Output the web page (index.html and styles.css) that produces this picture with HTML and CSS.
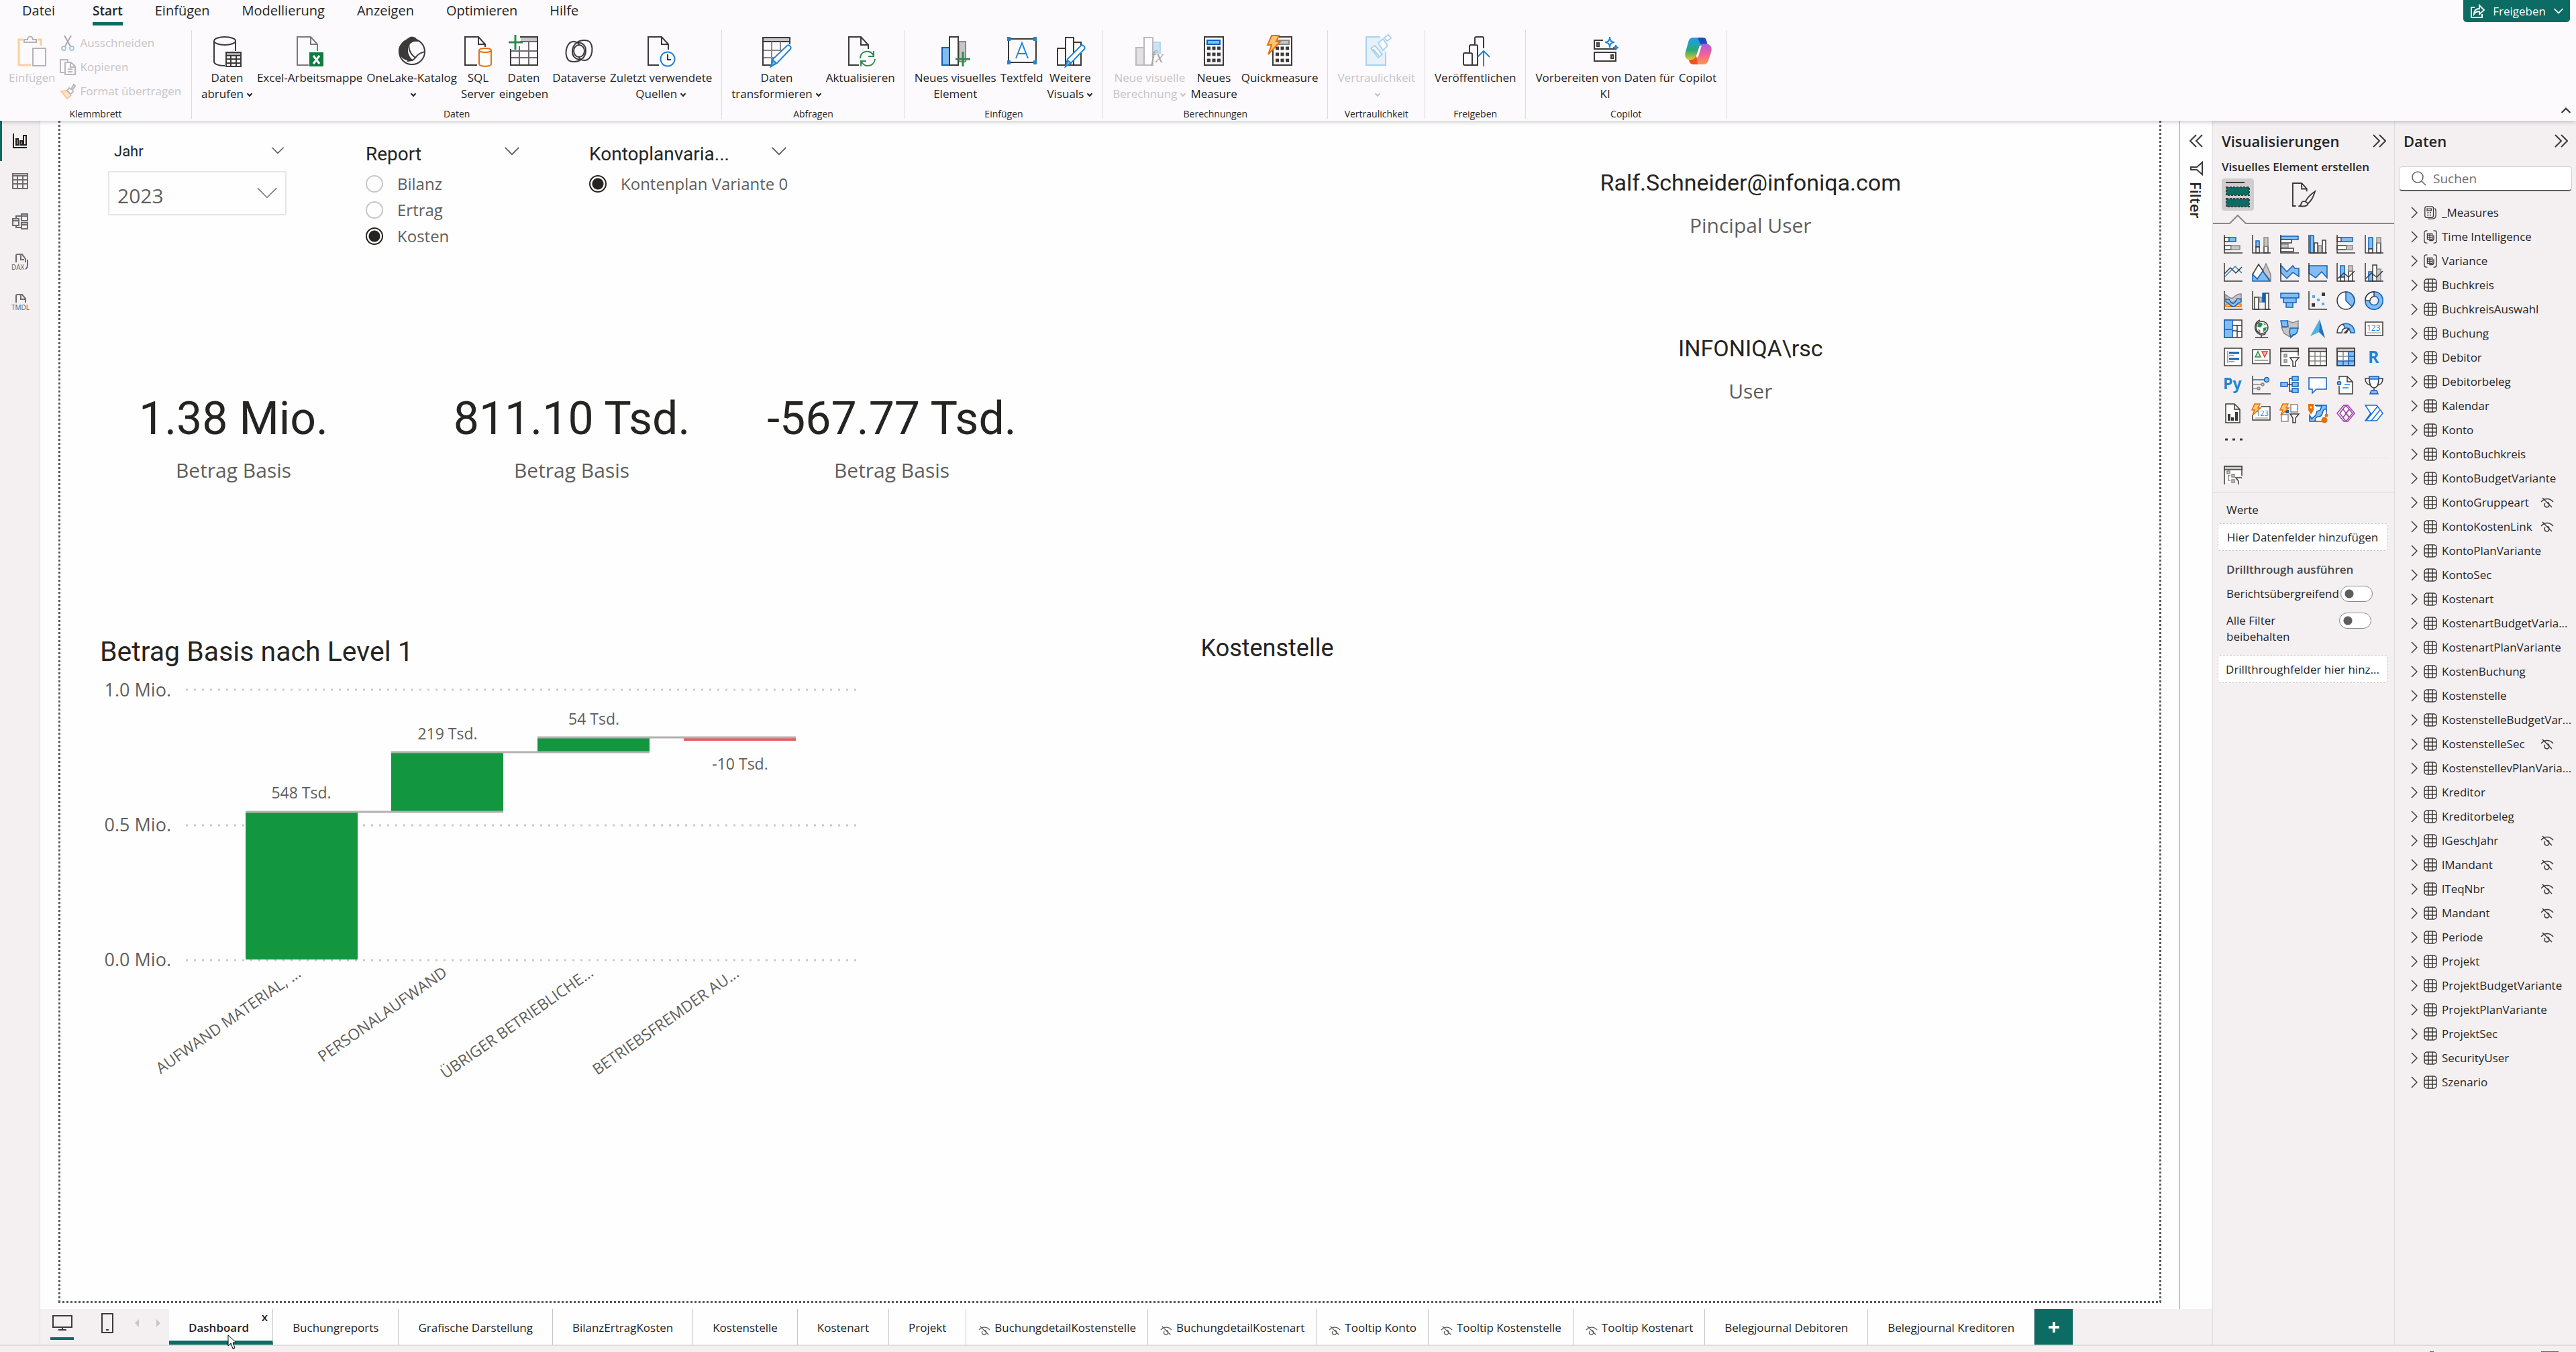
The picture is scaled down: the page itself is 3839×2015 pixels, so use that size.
FILE: index.html
```html
<!DOCTYPE html>
<html lang="de">
<head>
    <meta charset="UTF-8">
    <meta name="viewport" content="width=device-width, initial-scale=1.0">
    <title>Dashboard</title>
    <link rel="stylesheet" href="styles.css">
</head>
<body>
    <!-- shared icons -->
    <svg class="sprite" aria-hidden="true">
        <symbol id="chev-down" viewBox="0 0 24 14"><path d="M1 1l11 11L23 1"/></symbol>
        <symbol id="chev-right" viewBox="0 0 10 18"><path d="M1 1l8 8-8 8"/></symbol>
        <symbol id="dbl-right" viewBox="0 0 20 20"><path d="M1 1l9 9-9 9M10 1l9 9-9 9"/></symbol>
        <symbol id="dbl-left" viewBox="0 0 20 20"><path d="M19 1l-9 9 9 9M10 1l-9 9 9 9"/></symbol>
        <symbol id="eye-off" viewBox="0 0 20 16"><path d="M1 7c5-6 13-6 18 0M3 1l14 14M7 9a3.500 3.500 0 1 0 6 2M9 7.500a3.500 3.500 0 0 1 4 3"/></symbol>
        <symbol id="t-table" viewBox="0 0 20 20"><rect x="1" y="1" width="18" height="18" rx="4"/><path d="M7 1v18M13 1v18M1 7h18M1 13h18"/></symbol>
        <symbol id="t-measure" viewBox="0 0 20 22"><rect x="1" y="1" width="14" height="18" rx="3"/><path d="M4.500 4.500h7v3h-7zM17 4c2 1 2 3 2 5v6c0 4-2 6-6 6H6"/><path d="M5 11h2M9 11h2M5 15h2M9 15h2" stroke-width="2"/></symbol>
        <symbol id="t-calc" viewBox="0 0 22 22"><path d="M6 1H4a3 3 0 0 0-3 3v14a3 3 0 0 0 3 3h2M16 1h2a3 3 0 0 1 3 3v14a3 3 0 0 1-3 3h-2M6 6h8v9H6zM6 9h8M6 12h8M10 6v9M16.500 8v6c0 2-1 3-3 3H9"/></symbol>
    </svg>

    <header class="ribbon">
        <nav class="menu">
            <a href="#" class="file">Datei</a>
            <a href="#" class="active">Start</a>
            <a href="#">Einfügen</a>
            <a href="#">Modellierung</a>
            <a href="#">Anzeigen</a>
            <a href="#">Optimieren</a>
            <a href="#">Hilfe</a>
            <button class="share">
                <svg width="22" height="22" viewBox="0 0 22 22"><path d="M7 5H2v15h16v-5M6 15c0-6 3-8 8-8V2l7 7-7 6v-4c-4 0-6 1-8 4z"/></svg>
                Freigeben
                <svg width="14" height="9" viewBox="0 0 24 14"><path d="M1 1l11 11L23 1" stroke-width="3"/></svg>
            </button>
        </nav>
        <div class="groups">
            <section class="group clipboard">
                <div class="tools">
                    <button class="tool off">
                        <svg viewBox="0 0 44 48"><path d="M8 7H2v38h18M30 7h5v9" stroke="#fbcf9c" stroke-width="3"/><path d="M10 11V7h5c0-6 8-6 8 0h5v4zM23 20h19v26H23z" stroke="#b5b3b5" fill="#fcfafd"/></svg>
                        <span>Einfügen</span>
                    </button>
                    <div class="small-tools">
                        <button><svg viewBox="0 0 24 24"><path d="M7 1l9 16M17 1L8 17" stroke="#a9a7a9"/><circle cx="6" cy="20" r="3" stroke="#9cc8ea"/><circle cx="18" cy="20" r="3" stroke="#9cc8ea"/></svg>Ausschneiden</button>
                        <button><svg viewBox="0 0 24 24"><path d="M8 20H1V1h11v4M8 5h9l6 6v12H8zM16 5v7h7M12 15h7M12 19h7"/></svg>Kopieren</button>
                        <button><svg viewBox="0 0 24 24"><path d="M2 12l9-1 6 7-6 5z" fill="#fde3c6" stroke="#f9c999"/><path d="M11 11l3-4 3 2 4-7 2 2-4 6 1 3-4 3z"/></svg>Format übertragen</button>
                    </div>
                </div>
                <h2>Klemmbrett</h2>
            </section>
            <section class="group">
                <div class="tools">
                    <button class="tool">
                        <svg viewBox="0 0 44 48"><path d="M3 9v31c0 3 5 6 16 6M35 9v15"/><ellipse cx="19" cy="9" rx="16" ry="6"/><path d="M21 26h22v21H21z" fill="#fff"/><path d="M21 26h22v5H21z" fill="#a8a6a8"/><path d="M28 31v16M36 31v16M21 36h22M21 42h22"/></svg>
                        <span>Daten<br>abrufen<i class="caret"></i></span>
                    </button>
                    <button class="tool">
                        <svg viewBox="0 0 44 48"><path d="M20 45H3V3h20l10 11v10M23 3v11h10" stroke="#7b797b"/><path d="M21 26h21v21H21z" fill="#107c41" stroke="none"/><path d="M27 31l9 12M36 31l-9 12" stroke="#fff" stroke-width="3"/></svg>
                        <span>Excel-Arbeitsmappe</span>
                    </button>
                    <button class="tool">
                        <svg viewBox="0 0 44 48"><circle cx="22" cy="25" r="19"/><path d="M14 8C20 2 26 2 30 9c-8-1-14 4-15 11-1 8 2 13 7 18C8 38 0 28 4 18c2-4 6-6 10-10z" fill="#3b3a39"/><path d="M18 11c-2 9 1 17 9 23 4-6 8-7 14-9M27 34c-3 4-7 5-12 5"/></svg>
                        <span>OneLake-Katalog<br><i class="caret"></i></span>
                    </button>
                    <button class="tool">
                        <svg viewBox="0 0 44 48"><path d="M21 45H3V3h20l10 11v4M23 3v11h10"/><path d="M24 23v20c0 5 18 5 18 0V23" stroke="#e3700f" fill="#fff"/><ellipse cx="33" cy="23" rx="9" ry="3" stroke="#e3700f" fill="#fff"/></svg>
                        <span>SQL<br>Server</span>
                    </button>
                    <button class="tool">
                        <svg viewBox="0 0 44 48"><path d="M18 4h25v6H18z" fill="#c8c6c8" stroke="none"/><path d="M17 3h26v42H3V21M17 10h26M3 24h40M3 34h40M16 17v28M30 10v35" stroke="#6d6b6d"/><path d="M17 3h26v42H3V21"/><path d="M10 0v22M0 11h21" stroke="#2e8b4c" stroke-width="3"/></svg>
                        <span>Daten<br>eingeben</span>
                    </button>
                    <button class="tool">
                        <svg viewBox="0 0 44 48"><ellipse cx="22" cy="24" rx="8" ry="9"/><path d="M36 9c-13-4-24 4-24 16 0 9 9 15 17 9M8 39c13 4 24-4 24-16 0-9-9-15-17-9M36 9c9 5 7 29-6 29-5 0-8-3-8-5M8 39C-1 34 1 10 14 10c5 0 8 3 8 5"/></svg>
                        <span>Dataverse</span>
                    </button>
                    <button class="tool">
                        <svg viewBox="0 0 44 48"><path d="M19 45H3V3h20l10 11v8M23 3v11h10"/><circle cx="32" cy="36" r="10.500" stroke="#2284d1" fill="#fff"/><path d="M32 29v8h5"/></svg>
                        <span>Zuletzt verwendete<br>Quellen<i class="caret"></i></span>
                    </button>
                </div>
                <h2>Daten</h2>
            </section>
            <section class="group">
                <div class="tools">
                    <button class="tool">
                        <svg viewBox="0 0 44 48"><path d="M2 4h40v6H2z" fill="#c8c6c8"/><path d="M2 23h32M2 34h22M15 10v35M28 10v21" stroke="#8a8886"/><path d="M15 45H2V4h40v10"/><path d="M14 47l3-11 21-20c3-2 7 2 5 5L23 42z" fill="#fff" stroke="#2284d1"/><path d="M14 47l3-9 5 4z" fill="#83bdf0" stroke="#2284d1"/></svg>
                        <span>Daten<br>transformieren<i class="caret"></i></span>
                    </button>
                    <button class="tool">
                        <svg viewBox="0 0 44 48"><path d="M20 45H5V3h18l11 12v6M23 3v12h11"/><path d="M22 35c0-13 17-13 20-4M42 24v8h-8M44 36c-1 12-17 13-20 4M23 47v-8h8" stroke="#2e8b4c"/></svg>
                        <span>Aktualisieren</span>
                    </button>
                </div>
                <h2>Abfragen</h2>
            </section>
            <section class="group">
                <div class="tools">
                    <button class="tool">
                        <svg viewBox="0 0 44 48"><path d="M2 19h11v26H2z" fill="#83bdf0" stroke="#1060b8"/><path d="M27 10h10v30H27z" fill="#c8c6c4" stroke="#8a8886"/><path d="M13 3h13v42H13z" fill="#fff"/><path d="M33 25v22M22 36h22" stroke="#2e8b4c" stroke-width="3"/></svg>
                        <span>Neues visuelles<br>Element</span>
                    </button>
                    <button class="tool">
                        <svg viewBox="0 0 44 48"><path d="M2 6h41v35H2z"/><path d="M0 3h5v6H0zM39 3h5v6h-5zM0 38h5v6H0zM39 38h5v6h-5z" fill="#2284d1" stroke="none"/><path d="M13 35l9-23 9 23M16 28h12" stroke="#2284d1"/></svg>
                        <span>Textfeld</span>
                    </button>
                    <button class="tool">
                        <svg viewBox="0 0 44 48"><path d="M3 20h12v25H3zM27 11h11v34H27z"/><path d="M15 4h12v41H15z" fill="#fff"/><path d="M15 47l3-11 20-20c3-2 7 2 5 5L23 42z" fill="#fff" stroke="#2284d1"/><path d="M15 47l3-9 5 4z" fill="#83bdf0" stroke="#2284d1"/></svg>
                        <span>Weitere<br>Visuals<i class="caret"></i></span>
                    </button>
                </div>
                <h2>Einfügen</h2>
            </section>
            <section class="group">
                <div class="tools">
                    <button class="tool off">
                        <svg viewBox="0 0 44 48"><path d="M2 19h12v26H2z" fill="#e3e1e3" stroke="#bbb"/><path d="M27 11h11v16H27z" fill="#cce3f6" stroke="#b3d3ee"/><path d="M14 4h13v41H14z" fill="#fff" stroke="#bbb"/><text x="24" y="41" font-size="26" font-style="italic" font-family="Liberation Serif, serif" fill="#a9a7a9">fx</text></svg>
                        <span>Neue visuelle<br>Berechnung<i class="caret"></i></span>
                    </button>
                    <button class="tool">
                        <svg viewBox="0 0 44 48"><path d="M8 3h28v42H8z"/><path d="M12 8h19v6H12z" fill="#83bdf0" stroke="#1060b8"/><path d="M12 20h20M12 29h20M12 38h20" stroke-width="5" stroke-dasharray="5 2.500"/></svg>
                        <span>Neues<br>Measure</span>
                    </button>
                    <button class="tool">
                        <svg viewBox="0 0 44 48"><path d="M12 3h28v42H12z" fill="#fff"/><path d="M20 8h16v6H20z" fill="#c8c6c4" stroke="#8a8886"/><path d="M16 20h20M16 29h20M16 38h20" stroke-width="5" stroke-dasharray="5 2.500"/><path d="M10 1h11l-4 9h6L5 29l5-14H4z" fill="#ffc66e" stroke="#e3700f"/></svg>
                        <span>Quickmeasure</span>
                    </button>
                </div>
                <h2>Berechnungen</h2>
            </section>
            <section class="group">
                <div class="tools">
                    <button class="tool off">
                        <svg class="label-icon" viewBox="0 0 44 48"><path d="M36 26v19H7V3h21" fill="#e6f1fa"/><path d="M14 20l6-4 11 13-6 5zM17 21l9 10M25 12l7-6 7 10-7 7zM34 4l6-4 4 5-6 4z" fill="#fff"/></svg>
                        <span>Vertraulichkeit<br><i class="caret"></i></span>
                    </button>
                </div>
                <h2>Vertraulichkeit</h2>
            </section>
            <section class="group">
                <div class="tools">
                    <button class="tool">
                        <svg viewBox="0 0 44 48"><path d="M26 45H6c-2 0-2-1-2-2V29c0-2 1-2 2-2h7V17c0-2 1-2 2-2h6V5c0-2 1-2 2-2h9c2 0 2 1 2 2v15M13 27c3 0 4 0 4 2v16M21 15c3 0 4 0 4 2v28"/><path d="M34 47V24M25 33l9-9 9 9" stroke="#2284d1"/></svg>
                        <span>Veröffentlichen</span>
                    </button>
                </div>
                <h2>Freigeben</h2>
            </section>
            <section class="group">
                <div class="tools">
                    <button class="tool">
                        <svg viewBox="0 0 44 48"><path d="M19 8H6v13h32M6 26h32v13H6zM10 12h3v5h-3zM31 30h3v5h-3z"/><path d="M29 3c0 5 2 8 7 8-5 0-7 3-7 8 0-5-2-8-7-8 5 0 7-3 7-8zM38 15c0 3 1 4 4 4-3 0-4 1-4 4 0-3-1-4-4-4 3 0 4-1 4-4z" stroke="#2284d1" fill="#fff"/></svg>
                        <span>Vorbereiten von Daten für<br>KI</span>
                    </button>
                    <button class="tool">
                        <svg class="copilot" viewBox="0 0 44 48">
                            <defs>
                                <linearGradient id="cp-a" x1="0" y1="0" x2="0" y2="1"><stop offset="0" stop-color="#1e9bf0"/><stop offset=".55" stop-color="#2aa876"/><stop offset="1" stop-color="#f7c81e"/></linearGradient>
                                <linearGradient id="cp-b" x1="0" y1="0" x2="0" y2="1"><stop offset="0" stop-color="#b05ae0"/><stop offset=".5" stop-color="#f0609a"/><stop offset="1" stop-color="#ff9a4c"/></linearGradient>
                            </defs>
                            <path d="M15 4h14c5 0 6 3 7 8l1 3c-6-1-9 1-11 6l-4 12c-2 5-5 6-9 5-9-1-11-5-9-13l4-14c1-4 3-7 7-7z" fill="url(#cp-a)"/>
                            <path d="M22 4h7c5 0 6 3 7 10h-8c-3-1-4-5-6-10z" fill="#1b49c4"/>
                            <path d="M30 44H17c-5 0-7-2-8-7 6 1 9-1 11-6l4-11c2-5 4-7 8-7 10 0 12 6 10 13l-4 12c-1 4-4 6-8 6z" fill="url(#cp-b)"/>
                            <path d="M26 16h2l-5 16c-1 2-2 2-4 2l5-15c0-2 1-3 2-3z" fill="#fff"/>
                            <path d="M9 37c6 1 9-1 11-6l2 13h-5c-5 0-7-2-8-7z" fill="#f4511e"/>
                        </svg>
                        <span>Copilot</span>
                    </button>
                </div>
                <h2>Copilot</h2>
            </section>
            <button class="collapse" aria-label="Menüband reduzieren"><svg width="14" height="9" viewBox="0 0 24 14"><path d="M1 13L12 2l11 11" stroke-width="4"/></svg></button>
        </div>
    </header>

    <div class="workspace">
        <nav class="rail">
            <button class="active" aria-label="Berichtsansicht"><svg viewBox="0 0 24 24"><path d="M2 1v21h20M6 9h3v9H6zM12 12h3v6h-3zM17 4h4v14h-4z"/></svg></button>
            <button aria-label="Tabellenansicht"><svg viewBox="0 0 24 24"><path d="M1 1h22v22H1zM1 4h22M1 10h22M1 16h22M8 4v19M16 4v19"/></svg></button>
            <button aria-label="Modellansicht"><svg viewBox="0 0 24 24"><path d="M1 8h9v10H1zM14 1h9v10h-9zM14 14h9v9h-9zM1 11h9M14 4h9M14 17h9M6 8V4h8M6 18v3h8"/></svg></button>
            <button aria-label="DAX-Abfrageansicht"><svg viewBox="0 0 24 24"><path d="M6 13V3c0-1 1-2 2-2h7l5 7v5M13 1v8h5M23 9v8c0 3-1 5-3 6"/><text x="-1" y="24" font-size="10">DAX</text></svg></button>
            <button aria-label="TMDL-Ansicht"><svg viewBox="0 0 24 24"><path d="M6 13V3c0-1 1-2 2-2h7l5 6v6M13 1v7h7"/><text x="-1" y="24" font-size="10">TMDL</text></svg></button>
        </nav>

        <div class="center">
            <div class="stage">
                <main class="page">
                    <div class="col">
                        <div class="slicers">
                            <section class="slicer year">
                                <header><label for="year">Jahr</label><svg width="20" height="11"><use href="#chev-down"/></svg></header>
                                <div class="dropdown">
                                    <select id="year"><option>2023</option></select>
                                    <svg width="32" height="18"><use href="#chev-down"/></svg>
                                </div>
                            </section>
                            <section class="slicer report">
                                <header><h3>Report</h3><svg width="24" height="13"><use href="#chev-down"/></svg></header>
                                <label><input type="radio" name="report">Bilanz</label>
                                <label><input type="radio" name="report">Ertrag</label>
                                <label><input type="radio" name="report" checked>Kosten</label>
                            </section>
                            <section class="slicer plan">
                                <header><h3>Kontoplanvaria...</h3><svg width="24" height="13"><use href="#chev-down"/></svg></header>
                                <label><input type="radio" name="plan" checked>Kontenplan Variante 0</label>
                            </section>
                        </div>
                        <div class="kpis">
                            <div class="kpi"><strong>1.38 Mio.</strong><span>Betrag Basis</span></div>
                            <div class="kpi"><strong>811.10 Tsd.</strong><span>Betrag Basis</span></div>
                            <div class="kpi"><strong>-567.77 Tsd.</strong><span>Betrag Basis</span></div>
                        </div>
                        <section class="chart">
                            <h3>Betrag Basis nach Level 1</h3>
                            <svg width="1130" height="620" viewBox="0 0 1130 620">
                                <g class="grid"><path d="M128 28H1128M128 230H1128M128 431H1128"/></g>
                                <g class="axis">
                                    <text x="106" y="38">1.0 Mio.</text>
                                    <text x="106" y="239">0.5 Mio.</text>
                                    <text x="106" y="440">0.0 Mio.</text>
                                </g>
                                <g class="up">
                                    <rect x="217" y="210" width="167" height="220"/>
                                    <rect x="434" y="121" width="167" height="89"/>
                                    <rect x="652" y="99" width="167" height="23"/>
                                </g>
                                <rect class="down" x="870" y="100" width="167" height="4"/>
                                <path class="connector" d="M217 210H601M434 121H819M652 99H1037"/>
                                <g class="values">
                                    <text x="300" y="190">548 Tsd.</text>
                                    <text x="518" y="102">219 Tsd.</text>
                                    <text x="736" y="80">54 Tsd.</text>
                                    <text x="954" y="147">-10 Tsd.</text>
                                </g>
                                <g class="cats">
                                    <text transform="translate(301 454) rotate(-35)">AUFWAND MATERIAL, ...</text>
                                    <text transform="translate(519 453) rotate(-35)">PERSONALAUFWAND</text>
                                    <text transform="translate(737 453) rotate(-35)">ÜBRIGER BETRIEBLICHE...</text>
                                    <text transform="translate(954 454) rotate(-35)">BETRIEBSFREMDER AU...</text>
                                </g>
                            </svg>
                        </section>
                    </div>
                    <div class="col">
                        <div class="users">
                            <div class="user"><strong>Ralf.Schneider@infoniqa.com</strong><span>Pincipal User</span></div>
                            <div class="user"><strong>INFONIQA\rsc</strong><span>User</span></div>
                        </div>
                        <h3 class="cost-title">Kostenstelle</h3>
                    </div>
                </main>
                <aside class="filter-pane">
                    <button aria-label="Filterbereich erweitern"><svg width="20" height="20"><use href="#dbl-left"/></svg></button>
                    <svg width="20" height="20" viewBox="0 0 20 20"><path d="M19 1v18l-8-7H2V8h9z"/></svg>
                    <h2>Filter</h2>
                </aside>
            </div>

            <footer class="tabs">
                <div class="views">
                    <button class="active" aria-label="Desktoplayout"><svg width="30" height="24" viewBox="0 0 30 24"><path d="M1 1h28v17H1zM15 18v4M9 22h12"/></svg></button>
                    <button class="phone" aria-label="Mobiles Layout"><svg width="20" height="30" viewBox="0 0 20 30"><path d="M2 1h16v28H2zM8 25h4"/></svg></button>
                    <button class="step" aria-label="Zurück"><svg width="6" height="12" viewBox="0 0 6 12"><path d="M6 0v12L0 6z"/></svg></button>
                    <button class="step" aria-label="Weiter"><svg width="6" height="12" viewBox="0 0 6 12"><path d="M0 0v12l6-6z"/></svg></button>
                </div>
                <a href="#" class="tab active">Dashboard<span class="close">x</span>
                    <svg class="pointer" width="14" height="22" viewBox="0 0 14 22"><path d="M1 1v16l4-4 3 8 3-1-3-8h5z"/></svg>
                </a>
                <a href="#" class="tab">Buchungreports</a>
                <a href="#" class="tab">Grafische Darstellung</a>
                <a href="#" class="tab">BilanzErtragKosten</a>
                <a href="#" class="tab">Kostenstelle</a>
                <a href="#" class="tab">Kostenart</a>
                <a href="#" class="tab">Projekt</a>
                <a href="#" class="tab hid"><svg><use href="#eye-off"/></svg>BuchungdetailKostenstelle</a>
                <a href="#" class="tab hid"><svg><use href="#eye-off"/></svg>BuchungdetailKostenart</a>
                <a href="#" class="tab hid"><svg><use href="#eye-off"/></svg>Tooltip Konto</a>
                <a href="#" class="tab hid"><svg><use href="#eye-off"/></svg>Tooltip Kostenstelle</a>
                <a href="#" class="tab hid"><svg><use href="#eye-off"/></svg>Tooltip Kostenart</a>
                <a href="#" class="tab">Belegjournal Debitoren</a>
                <a href="#" class="tab">Belegjournal Kreditoren</a>
                <button class="add" aria-label="Neue Seite"><svg width="16" height="16" viewBox="0 0 16 16"><path d="M8 0v16M0 8h16" stroke-width="4"/></svg></button>
            </footer>
        </div>

        <aside class="pane viz">
            <header><h2>Visualisierungen</h2><button aria-label="Reduzieren"><svg width="20" height="20"><use href="#dbl-right"/></svg></button></header>
            <h3>Visuelles Element erstellen</h3>
            <div class="modes">
                <button class="active" aria-label="Visual erstellen"><svg width="36" height="40" viewBox="0 0 36 40"><path d="M0 2h28"/><path d="M1 9h34v12H1zM1 26h34v12H1z" fill="#0c6b63" stroke-dasharray="3 2"/></svg></button>
                <button aria-label="Visual formatieren"><svg width="36" height="38" viewBox="0 0 38 38"><path d="M7 37H2V1h14l8 9v4M16 1v9h8M37 14c-7 5-13 11-15 16l4 3c5-4 9-12 11-19zM22 30c-4-1-6 0-7 4 0 2-2 3-4 3 7 1 14 1 15-4"/></svg></button>
            </div>
            <svg class="notch" viewBox="0 0 271 14"><path d="M0 13H25L37 1 49 13H271"/></svg>
            <div class="visuals">
                <svg viewBox="0 0 28 28"><path class="w" d="M1 4h7v6H1zM1 16h10v6H1z"/><path class="b" d="M8 4h10v6H8z"/><path class="g" d="M11 16h13v6H11z"/><path d="M1 0v27h27"/></svg>
                <svg viewBox="0 0 28 28"><path class="b" d="M6 9h5v9H6z"/><path class="w" d="M6 18h5v9H6zM18 17h6v10h-6z"/><path class="g" d="M18 4h6v13h-6z"/><path d="M1 0v27h27"/></svg>
                <svg viewBox="0 0 28 28"><path class="w" d="M1 7h16v5H1zM1 20h19v5H1z"/><path class="g" d="M1 14h11v5H1z"/><path class="b" d="M1 2h26v5H1z"/><path d="M1 0v27h27"/></svg>
                <svg viewBox="0 0 28 28"><path class="w" d="M9 12h5v15H9zM21 8h5v19h-5z"/><path class="g" d="M15 16h5v11h-5z"/><path class="b" d="M3 1h5v26H3z"/><path d="M1 0v27h27"/></svg>
                <svg viewBox="0 0 28 28"><path class="w" d="M1 4h6v6H1zM1 16h14v6H1z"/><path class="b" d="M7 4h17v6H7z"/><path class="g" d="M15 16h9v6h-9z"/><path d="M1 0v27h27"/></svg>
                <svg viewBox="0 0 28 28"><path class="b" d="M6 4h6v17H6z"/><path class="w" d="M6 21h6v6H6zM18 12h6v15h-6z"/><path class="g" d="M18 4h6v8h-6z"/><path d="M1 0v27h27"/></svg>

                <svg viewBox="0 0 28 28"><path d="M1 21L17 5l10 10" stroke="#2284d1"/><path d="M1 16l9-9 8 8 9-9M1 0v27h27"/></svg>
                <svg viewBox="0 0 28 28"><path class="g" d="M21 1l7 16v9L16 12z"/><path class="w" d="M1 17l9-15 7 10-9 12z"/><path class="b" d="M1 17l7 7 8-12 11 15H1z"/></svg>
                <svg viewBox="0 0 28 28"><path class="b" d="M1 3l9 10 9-9 3 4h6v12l-9-6-9 9-9-9z"/><path d="M1 0v27h27"/></svg>
                <svg viewBox="0 0 28 28"><path class="b" d="M1 4h27v18l-8-9-9 9-10-7z"/><path d="M1 0v27h27"/></svg>
                <svg viewBox="0 0 28 28"><path class="b" d="M6 4h6v17H6z"/><path class="w" d="M6 21h6v6H6zM18 12h6v15h-6z"/><path class="g" d="M18 4h6v8h-6z"/><path d="M1 24l10-9 7 6 9-9M1 0v27h27"/></svg>
                <svg viewBox="0 0 28 28"><path class="b" d="M6 13h6v14H6z"/><path class="w" d="M12 3h6v24h-6z"/><path class="g" d="M18 9h6v18h-6z"/><path d="M1 24l9-9 8 6 9-9M1 0v27h27"/></svg>

                <svg viewBox="0 0 28 28"><path d="M3 19h23v4H3z" fill="#ffc66e" stroke="#e3700f"/><path class="g" d="M3 5c6 5 9 7 12 4s6-5 11-5v7c-5 0-8 3-11 5S8 15 3 12z"/><path class="b" d="M3 12h5c4 9 8 8 12-1l6 1v4c-5 0-7 7-12 7S8 16 3 16z"/><path d="M1 0v27h27"/></svg>
                <svg viewBox="0 0 28 28"><path class="w" d="M4 9h6v18H4zM20 3h5v24h-5z"/><path class="g" d="M11 9h4v7h-4z"/><path d="M16 3h3v13h-3z" fill="#1060b8" stroke="#1060b8"/><path d="M1 0v27h27"/></svg>
                <svg viewBox="0 0 28 28"><path class="b" d="M1 3h27v7H1zM5 10h19v7H5zM9 17h10v7H9z"/></svg>
                <svg viewBox="0 0 28 28"><path d="M6 6h4v4H6zM13 11h4v4h-4zM20 17h4v4h-4z" fill="#5fa8e6" stroke="none"/><path d="M20 2h5v5h-5zM5 18h5v5H5z" fill="#3b3a39" stroke="none"/><path d="M1 0v27h27"/></svg>
                <svg viewBox="0 0 28 28"><circle class="w" cx="14" cy="14" r="13"/><path class="b" d="M14 14V1a13 13 0 0 1 9 22z"/></svg>
                <svg viewBox="0 0 28 28"><circle cx="14" cy="14" r="10" stroke="#1060b8" stroke-width="8"/><circle cx="14" cy="14" r="10" stroke="#83bdf0" stroke-width="5"/><path class="w" d="M1 14A13 13 0 0 1 14 1v7a6 6 0 0 0-6 6z"/></svg>

                <svg viewBox="0 0 28 28"><path class="w" d="M1 1h26v26H1zM13 9h14M20 9v18M13 17h7M20 18h7"/><path class="b" d="M1 1h12v26H1zM1 15h12"/></svg>
                <svg viewBox="0 0 28 28"><circle cx="15" cy="12" r="9" fill="#fff"/><path d="M10 5l5 0 1 3-3 4-5-1zM17 13l5-2-1 5-4 3zM9 14l4 3-2 2zM17 5l4 3-2 1z" fill="#2e8b4c" stroke="none"/><path d="M12 1C4 4 2 15 9 21c4 3 9 3 12 0M14 23v4M5 27h19"/></svg>
                <svg viewBox="0 0 28 28"><path class="g" d="M11 2l8 3 8-3v10l-4 10-6 4-4-1-7-4-4-9h7z"/><path class="b" d="M1 2h10l1 9H3zM15 13h12c-1 5-2 10-8 10l-3 4-2-8z"/></svg>
                <svg viewBox="0 0 28 28"><path d="M17 0L3 25l13-6z" fill="#52b0e0" stroke="none"/><path d="M17 0l8 28-9-9z" fill="#1f74c4" stroke="none"/></svg>
                <svg viewBox="0 0 28 28"><path class="w" d="M1 20C1 13 5 8 10 7l3 6c-3 1-5 3-5 7z"/><path class="b" d="M10 7c9-3 17 3 17 13h-6c0-4-3-8-8-7z"/><path d="M12 20l7-7-4 7z" fill="#3b3a39"/></svg>
                <svg viewBox="0 0 28 28"><path class="w" d="M1 4h26v20H1z"/><text x="3" y="17" font-size="12" class="num">123</text><path d="M4 20h20" stroke="#8a8886" stroke-width="1"/></svg>

                <svg viewBox="0 0 28 28"><path class="w" d="M1 1h26v26H1z"/><path d="M6 5v18" stroke="#8a8886"/><path d="M8 8h15M8 17h15" stroke="#1060b8" stroke-width="3"/><path d="M8 12h7M8 21h8" stroke="#8a8886"/></svg>
                <svg viewBox="0 0 28 28"><path class="w" d="M1 3h26v21H1z"/><path d="M9 6l4 8H5z" fill="#cfe8d6" stroke="#2e8b4c"/><path d="M19 14l4-8h-8z" fill="#f6b3a8" stroke="#e0402c"/><path d="M4 19h20" stroke="#8a8886"/></svg>
                <svg viewBox="0 0 28 28"><path class="w" d="M1 1h26v26H1z" stroke="none"/><path d="M1 1h26v5H1z" fill="#c8c6c4"/><path d="M27 12V1H1v26h14"/><path class="g" d="M6 10h4v4H6zM6 18h4v4H6z"/><path class="w" d="M15 15h13l-5 6v7h-4v-7z"/></svg>
                <svg viewBox="0 0 28 28"><path class="w" d="M1 1h26v26H1z"/><path d="M1 13h26M1 20h26M10 6v21M18 6v21" stroke="#8a8886"/><path d="M1 1v26h26V1"/><path d="M1 1h26v5H1z" fill="#c8c6c4"/></svg>
                <svg viewBox="0 0 28 28"><path class="w" d="M1 1h26v26H1z"/><path class="b" d="M18 6h9v21H1v-7h17zM1 20h26M10 20v7M18 20v7M18 13h9"/><path d="M1 13h17M10 6v14" stroke="#8a8886"/><path d="M1 1h26v26H1z"/><path d="M1 1h26v5H1z" fill="#c8c6c4"/></svg>
                <svg viewBox="0 0 28 28"><text x="5" y="23" font-size="25" class="lang">R</text></svg>

                <svg viewBox="0 0 28 28"><text x="-1" y="20" font-size="23" class="lang">Py</text></svg>
                <svg viewBox="0 0 28 28"><path d="M1 0v27h27"/><path d="M1 6h17" stroke="#1060b8"/><circle class="b" cx="22" cy="6" r="3.500"/><path d="M1 13h13M1 19h7" stroke="#8a8886"/><circle class="g" cx="16" cy="13" r="2"/><circle class="g" cx="10" cy="19" r="2"/></svg>
                <svg viewBox="0 0 28 28"><path d="M11 13h7M18 4h-4v19h4"/><path class="b" d="M1 10h10v6H1zM18 1h9v6h-9zM18 10h9v6h-9zM18 19h9v6h-9z"/></svg>
                <svg viewBox="0 0 28 28"><path d="M1 3h26v17H12l-6 6v-6H1z" fill="#fff" stroke="#1060b8"/></svg>
                <svg viewBox="0 0 28 28"><path class="w" d="M4 6V1h12l8 8v18H4V15M16 1v8h8"/><circle class="b" cx="4" cy="11" r="2.500"/><path d="M12 13h8M9 18h9" stroke="#2284d1"/></svg>
                <svg viewBox="0 0 28 28"><path d="M7 4H1c0 6 2 9 7 10M21 4h6c0 6-2 9-7 10M14 18v5"/><path class="w" d="M7 2h14c0 9-1 16-7 16S7 11 7 2z"/><path class="b" d="M7 1h14v4H7zM10 22h8l2 5H8z"/></svg>

                <svg viewBox="0 0 28 28"><path class="w" d="M3 0h13l8 8v20H3zM16 0v8h8"/><path d="M8 15v10M13 20v5M19 12v13" stroke-width="4"/></svg>
                <svg viewBox="0 0 28 28"><path class="w" d="M14 4h13v20H1V17"/><text x="6" y="18" font-size="11" class="num">123</text><path d="M5 21h19" stroke="#8a8886" stroke-width="1"/><path d="M4 0h8L9 6h4L1 17l3-8H0z" fill="#ffc66e" stroke="#e3700f"/></svg>
                <svg viewBox="0 0 28 28"><path d="M16 1h10v11H16zM2 16h10v10H2z" fill="#fff" stroke="#8a8886"/><path d="M8 9h5v5H8z" fill="#1060b8" stroke="none"/><path class="w" d="M15 15h13l-5 6v7h-4v-7z"/><path d="M4 0h8L9 6h4L1 17l3-8H0z" fill="#ffc66e" stroke="#e3700f"/></svg>
                <svg viewBox="0 0 28 28"><path class="w" d="M2 2h25v25H2z" stroke="none"/><path class="b" d="M10 2h17v6c-4-1-5 2-6 6s-3 5-6 5-5 3-5 7H2v-9l3 5 6-5 2-6 5-2 2-6h-8z"/><path d="M27 8v10M10 26h10" stroke="#1060b8"/><path d="M0 0h8v9l-4 7-4-7z" fill="#e3700f" stroke="none"/><circle cx="4" cy="5" r="1.500" fill="#fff" stroke="none"/><circle cx="24" cy="24" r="4.500" fill="#e3700f" stroke="none"/><circle cx="27" cy="17" r="2.500" fill="#e3700f" stroke="none"/></svg>
                <svg viewBox="0 0 28 28"><path d="M11 2h3l-9 12 9 12h-3L1 14zM17 2l10 12-10 12h-3L5 14l9-12zM14 2l5 6-9 12M14 26l5-6-9-12M19 8l-5 6 5 6 5-6z" fill="#fff" stroke="#9c3fa5"/></svg>
                <svg viewBox="0 0 28 28"><path d="M1 2h17l9 12-9 11H1l8-11zM3 24L19 4M10 25L23 9" fill="#fff" stroke="#0f6fd8"/></svg>
            </div>
            <button class="more" aria-label="Weitere Visuals"><svg width="26" height="4" viewBox="0 0 26 4"><path d="M0 2h4M11 2h4M22 2h4" stroke-width="3"/></svg></button>
            <div class="custom">
                <svg width="28" height="28" viewBox="0 0 28 28"><path class="w" d="M1 28V1h26v14"/><path d="M1 1h26v5H1z" fill="#c8c6c4"/><path class="g" d="M5 8h4v4H5zM12 13h4v4h-4zM12 21h4v4h-4z"/><path d="M7 14v8h3M7 15h3" stroke="#8a8886"/><path class="w" d="M27 18h-9l4 5v5"/></svg>
            </div>
            <div class="fields">
                <h4>Werte</h4>
                <div class="drop">Hier Datenfelder hinzufügen</div>
                <h4 class="strong">Drillthrough ausführen</h4>
                <div class="toggle"><label for="cross">Berichtsübergreifend</label><input type="checkbox" id="cross"></div>
                <div class="toggle"><label for="keep">Alle Filter beibehalten</label><input type="checkbox" id="keep"></div>
                <div class="drop">Drillthroughfelder hier hinz...</div>
            </div>
        </aside>

        <aside class="pane data">
            <header><h2>Daten</h2><button aria-label="Reduzieren"><svg width="20" height="20"><use href="#dbl-right"/></svg></button></header>
            <div class="search">
                <svg width="22" height="22" viewBox="0 0 22 22"><circle cx="9" cy="9" r="8"/><path d="M15 15l6 6"/></svg>
                <input type="text" placeholder="Suchen" aria-label="Suchen">
            </div>
            <ul id="tables"></ul>
        </aside>
    </div>
    <div class="status"><i></i><i></i></div>

    <script>
        // type: m = measure table, c = calculation group; hidden tables carry the eye icon
        const tables = [
            { name: '_Measures', type: 'm' }, { name: 'Time Intelligence', type: 'c' }, { name: 'Variance', type: 'c' },
            { name: 'Buchkreis' }, { name: 'BuchkreisAuswahl' }, { name: 'Buchung' }, { name: 'Debitor' },
            { name: 'Debitorbeleg' }, { name: 'Kalendar' }, { name: 'Konto' }, { name: 'KontoBuchkreis' },
            { name: 'KontoBudgetVariante' }, { name: 'KontoGruppeart', hidden: true }, { name: 'KontoKostenLink', hidden: true },
            { name: 'KontoPlanVariante' }, { name: 'KontoSec' }, { name: 'Kostenart' }, { name: 'KostenartBudgetVaria...' },
            { name: 'KostenartPlanVariante' }, { name: 'KostenBuchung' }, { name: 'Kostenstelle' },
            { name: 'KostenstelleBudgetVar...' }, { name: 'KostenstelleSec', hidden: true }, { name: 'KostenstellevPlanVaria...' },
            { name: 'Kreditor' }, { name: 'Kreditorbeleg' }, { name: 'lGeschJahr', hidden: true }, { name: 'lMandant', hidden: true },
            { name: 'lTeqNbr', hidden: true }, { name: 'Mandant', hidden: true }, { name: 'Periode', hidden: true },
            { name: 'Projekt' }, { name: 'ProjektBudgetVariante' }, { name: 'ProjektPlanVariante' }, { name: 'ProjektSec' },
            { name: 'SecurityUser' }, { name: 'Szenario' }
        ];
        const icons = { m: 't-measure', c: 't-calc' };

        document.getElementById('tables').innerHTML = tables.map(t => `
            <li><button>
                <svg class="arrow"><use href="#chev-right"/></svg>
                <svg class="kind"><use href="#${icons[t.type] || 't-table'}"/></svg>
                <span>${t.name}</span>
                ${t.hidden ? '<svg class="eye"><use href="#eye-off"/></svg>' : ''}
            </button></li>`).join('');
    </script>
</body>
</html>
```
FILE: styles.css
```css
* {
    box-sizing: border-box;
}
body {
    margin: 0;
    min-height: 100vh;
    display: flex;
    flex-direction: column;
    font-family: "Open Sans", "Noto Sans", sans-serif;
    font-size: 17px;
    line-height: 24px;
    color: #252423;
    background: #f4f0f2;
    overflow: hidden;
}
h2, h3, h4, ul {
    margin: 0;
    padding: 0;
    font-size: inherit;
    font-weight: 400;
}
button, input, select {
    font: inherit;
    color: inherit;
    background: none;
    border: none;
    padding: 0;
    margin: 0;
}
a {
    color: inherit;
    text-decoration: none;
}
svg {
    display: block;
    flex: none;
    fill: none;
    stroke: #3b3a39;
    stroke-width: 2;
    overflow: visible;
}
svg text {
    stroke: none;
}
.sprite {
    width: 0;
    height: 0;
    position: absolute;
}

/* Ribbon */
.ribbon {
    position: relative;
    z-index: 1;
    height: 180px;
    background: #fcfafd;
    box-shadow: 0 2px 6px rgba(0, 0, 0, 0.2);
}
.menu {
    display: flex;
    gap: 48px;
    height: 45px;
    padding: 0 9px 0 33px;
    font-size: 20px;
}
.menu a {
    height: 38px;
    line-height: 32px;
}
.menu .file {
    margin-right: 8px;
}
.menu .active {
    font-weight: 600;
    font-size: 19px;
    border-bottom: 5px solid #0c6b63;
}
.share {
    display: flex;
    align-items: center;
    gap: 12px;
    height: 33px;
    margin-left: auto;
    padding: 0 10px;
    font-size: 17px;
    color: #fff;
    background: #0c6b63;
    border-radius: 0 0 5px 5px;
}
.share svg {
    stroke: #fff;
}
.groups {
    display: flex;
}
.group {
    height: 132px;
    padding: 7px 11px 0;
    border-right: 1px solid #dcdadc;
}
.tools {
    display: flex;
    height: 108px;
}
.group h2 {
    font-size: 14px;
    line-height: 20px;
    text-align: center;
}
.tool {
    display: flex;
    flex-direction: column;
    align-items: center;
    gap: 4px;
    padding: 0 3px;
}
.tool > svg {
    width: 44px;
    height: 48px;
}
.tool span {
    white-space: nowrap;
}
.tool .label-icon {
    stroke: #a9d2f0;
}
.tool .copilot {
    stroke: none;
}
.caret {
    display: inline-block;
    width: 6px;
    height: 6px;
    margin: 0 2px 3px 6px;
    border: solid currentColor;
    border-width: 0 2px 2px 0;
    transform: rotate(45deg);
}
.off,
.small-tools {
    color: #c6c4c7;
}
.clipboard .tools {
    width: 263px;
}
.clipboard .tool {
    padding: 0 6px 0 2px;
}
.small-tools {
    display: flex;
    flex-direction: column;
    gap: 12px;
}
.small-tools button {
    display: flex;
    align-items: center;
    gap: 7px;
    white-space: nowrap;
}
.small-tools svg {
    width: 24px;
    height: 24px;
    stroke: #b9b7b9;
}
.collapse {
    align-self: flex-end;
    margin: 0 8px 8px auto;
}

/* Workspace */
.workspace {
    flex: 1;
    display: flex;
}
.rail {
    width: 60px;
    border-right: 1px solid #dedbdd;
}
.rail button {
    display: flex;
    align-items: center;
    justify-content: center;
    width: 100%;
    height: 60px;
    padding-right: 3px;
    border-left: 3px solid transparent;
}
.rail .active {
    border-color: #0c6b63;
}
.rail svg {
    width: 24px;
    height: 24px;
    stroke: #6d6b6d;
}
.rail .active svg {
    stroke: #201f1e;
}
.rail text {
    fill: #5b595b;
}
.center {
    flex: 1;
    display: flex;
    flex-direction: column;
    min-width: 0;
}
.stage {
    flex: 1;
    display: flex;
    padding-left: 27px;
    background: #fefefe;
}
.page {
    flex: 1;
    display: grid;
    grid-template-columns: 1702fr 1431fr;
    margin: 0 27px 9px 0;
    background:
        repeating-linear-gradient(#5b595b 0 3px, transparent 3px 6px) left / 3px 100% no-repeat,
        repeating-linear-gradient(#5b595b 0 3px, transparent 3px 6px) right / 3px 100% no-repeat,
        repeating-linear-gradient(90deg, #5b595b 0 3px, transparent 3px 6px) bottom / 100% 3px no-repeat;
}

/* Slicers */
.slicers {
    display: flex;
    gap: 100px;
    height: 403px;
    padding: 30px 0 0 74px;
}
.slicer header {
    display: flex;
    justify-content: space-between;
    height: 40px;
    margin-bottom: 4px;
    line-height: 40px;
}
.slicer header svg {
    margin: 9px 3px;
    stroke: #605e5c;
}
.slicer h3 {
    font: 400 28px/40px Roboto, sans-serif;
}
.slicer > label {
    display: flex;
    align-items: center;
    gap: 21px;
    height: 39px;
    font-size: 24px;
    color: #605e5c;
    white-space: nowrap;
}
.year {
    width: 284px;
    padding-right: 18px;
}
.year header {
    height: 32px;
    margin-bottom: 13px;
    padding-left: 9px;
    font: 400 22px/32px Roboto, sans-serif;
}
.report {
    width: 233px;
}
.plan {
    width: 298px;
}
.slicer input {
    appearance: none;
    width: 26px;
    height: 26px;
    border: 2px solid #c8c6c8;
    border-radius: 50%;
}
.slicer input:checked {
    border-color: #252423;
    background: radial-gradient(#252423 8px, transparent 9px);
}
.dropdown {
    display: flex;
    align-items: center;
    height: 66px;
    padding-right: 11px;
    border: 2px solid #e8e6e8;
}
.dropdown select {
    flex: 1;
    height: 100%;
    appearance: none;
    padding: 8px 12px 0;
    font-size: 30px;
    color: #605e5c;
}
.dropdown svg {
    stroke: #605e5c;
    stroke-width: 1;
}

/* KPI cards */
.kpis {
    display: flex;
    padding-left: 9px;
}
.kpi {
    width: 504px;
    display: flex;
    flex-direction: column;
    align-items: center;
    gap: 16px;
}
.kpi:last-child {
    width: 450px;
}
.kpi strong {
    font: 400 68px/82px Roboto, sans-serif;
}
.kpi span,
.user span {
    font-size: 30px;
    line-height: 40px;
    color: #605e5c;
}

/* Waterfall */
.chart {
    padding: 226px 0 0 62px;
}
.chart h3 {
    margin-bottom: 5px;
    font: 400 41px/48px Roboto, sans-serif;
}
.grid {
    stroke: #cbc9cb;
    stroke-dasharray: 3 9;
    stroke-width: 3;
}
.axis text {
    font-size: 27px;
    text-anchor: end;
    fill: #605e5c;
}
.values text {
    font-size: 23px;
    text-anchor: middle;
    fill: #605e5c;
}
.cats text {
    font-size: 23px;
    text-anchor: end;
    fill: #605e5c;
}
.up {
    fill: #12963f;
    stroke: none;
}
.down {
    fill: #ee5a5c;
    stroke: none;
}
.connector {
    stroke: #b3b0ad;
    stroke-width: 3;
}

/* User cards */
.users {
    display: flex;
    flex-direction: column;
    gap: 141px;
    padding: 70px 0 0 207px;
}
.user {
    display: flex;
    flex-direction: column;
    align-items: center;
    gap: 22px;
}
.user strong,
.cost-title {
    font: 400 34px/44px Roboto, sans-serif;
}
.cost-title {
    margin-top: 341px;
    font-size: 36px;
}

/* Filter pane */
.filter-pane {
    display: flex;
    flex-direction: column;
    align-items: center;
    width: 49px;
    padding-top: 20px;
    border-left: 1px solid #a19f9d;
}
.filter-pane > svg {
    margin: 21px 0 10px;
}
.filter-pane h2 {
    writing-mode: vertical-rl;
    font-size: 22px;
    font-weight: 600;
}

/* Page tabs */
.tabs {
    display: flex;
    height: 53px;
}
.views {
    display: flex;
    width: 192px;
    padding: 0 10px 7px 15px;
    gap: 22px;
}
.views button {
    display: flex;
    align-items: center;
    justify-content: center;
    width: 35px;
    border-bottom: 4px solid transparent;
}
.views .active {
    border-color: #0c6b63;
}
.views .phone {
    margin-left: 10px;
}
.views .step {
    width: 10px;
}
.step svg {
    fill: #c8c6c8;
    stroke: none;
}
.tab {
    position: relative;
    display: flex;
    align-items: center;
    gap: 6px;
    padding: 2px 29px 0;
    background: #fefefe;
    border-right: 1px solid #c8c6c8;
    white-space: nowrap;
}
.tab.active {
    font-weight: 600;
    border-bottom: 6px solid #0c6b63;
    padding: 8px 29px 0;
}
.tab.hid {
    padding: 2px 17px 0 18px;
}
.tab.hid svg {
    width: 18px;
    height: 16px;
    margin-top: 8px;
    stroke: #605e5c;
    stroke-width: 1.5;
}
.close {
    position: absolute;
    top: 0;
    right: 7px;
}
.tab .pointer {
    position: absolute;
    left: 87px;
    top: 38px;
    fill: #fff;
    stroke: #000;
    stroke-width: 1;
}
.add {
    display: flex;
    align-items: center;
    justify-content: center;
    width: 57px;
    background: #0c6b63;
}
.add svg {
    stroke: #fff;
}

/* Side panes */
.pane {
    width: 271px;
    border-left: 1px solid #dedbdd;
    white-space: nowrap;
}
.pane header {
    display: flex;
    align-items: center;
    justify-content: space-between;
    padding: 14px 12px 0 13px;
    height: 46px;
}
.pane h2 {
    font-size: 22px;
    font-weight: 600;
}
.viz h3 {
    padding: 11px 0 5px 13px;
    font-weight: 600;
}
.modes {
    display: flex;
    gap: 50px;
    padding-left: 13px;
}
.modes button {
    display: flex;
    align-items: center;
    justify-content: center;
    width: 48px;
    height: 48px;
    border-radius: 4px;
}
.modes .active {
    background: #d0cdcf;
}
.notch {
    width: 100%;
    height: 14px;
    margin-top: 6px;
    stroke: #8a8886;
}
.visuals {
    display: grid;
    grid-template-columns: repeat(6, 28px);
    gap: 14px;
    padding: 16px 0 0 16px;
}
.visuals svg,
.custom svg {
    stroke-width: 1.5;
}
.visuals .w, .custom .w {
    fill: #fff;
}
.visuals .b {
    fill: #83bdf0;
    stroke: #1060b8;
}
.visuals .g, .custom .g {
    fill: #c8c6c4;
    stroke: #8a8886;
}
.num {
    fill: #2284d1;
}
.lang {
    fill: #2284d1;
    font-weight: 700;
}
.more {
    display: block;
    margin: 23px 0 0 18px;
}
.custom {
    margin: 25px 9px 0 10px;
    padding: 11px 6px 0;
    height: 52px;
    border-top: 1px dashed #dedbdd;
}
.fields {
    padding: 13px 10px 0 7px;
    border-top: 1px solid #dedbdd;
}
.fields h4,
.toggle {
    padding-left: 13px;
}
.fields .strong {
    margin: 16px 0 12px;
    font-weight: 600;
    color: #484644;
}
.drop {
    display: flex;
    align-items: center;
    justify-content: center;
    height: 41px;
    margin-top: 8px;
    background: #fff;
    border: 1px dashed #c8c6c8;
    border-radius: 3px;
}
.toggle {
    display: flex;
    justify-content: space-between;
    gap: 2px;
    margin-bottom: 16px;
    padding-right: 24px;
}
.toggle label {
    white-space: normal;
}
.toggle input {
    appearance: none;
    flex: none;
    width: 48px;
    height: 24px;
    border: 1px solid #8a8886;
    border-radius: 12px;
    background: radial-gradient(circle at 12px 11px, #605e5c 6px, #fff 7px);
}

/* Data pane */
.search {
    display: flex;
    align-items: center;
    gap: 10px;
    height: 37px;
    margin: 22px 6px 14px;
    padding-left: 18px;
    background: #fff;
    border: 1px solid #d2d0ce;
    border-bottom: 2px solid #605e5c;
    border-radius: 5px;
}
.search svg {
    stroke: #605e5c;
    stroke-width: 1.5;
}
.search input {
    width: 100%;
    font-size: 19px;
}
.search input::placeholder {
    color: #706e6c;
    opacity: 1;
}
.data ul {
    list-style: none;
}
.data li button {
    display: flex;
    align-items: center;
    width: 100%;
    height: 36px;
    padding: 0 33px 0 24px;
}
.data li span {
    margin-left: 7px;
}
.arrow {
    width: 10px;
    height: 18px;
    margin-right: 9px;
    stroke-width: 1.5;
}
.kind {
    width: 20px;
    height: 20px;
    stroke-width: 1.5;
}
.eye {
    width: 20px;
    height: 16px;
    margin-left: auto;
    stroke-width: 1.5;
}

/* Status bar */
.status {
    display: flex;
    align-items: flex-end;
    justify-content: flex-end;
    gap: 160px;
    height: 11px;
    padding-right: 26px;
    border-top: 2px solid #dedbdd;
}
.status i {
    width: 26px;
    height: 1px;
    background: #605e5c;
}
.status i:first-child {
    width: 6px;
}
```
